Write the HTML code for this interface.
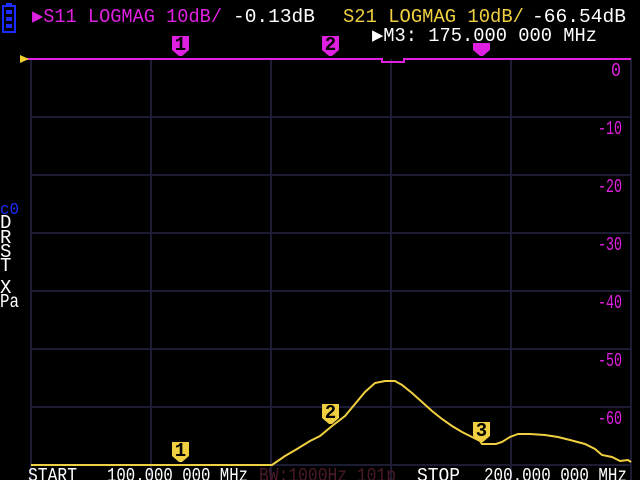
<!DOCTYPE html>
<html><head><meta charset="utf-8"><style>
html,body{margin:0;padding:0;background:#000;width:640px;height:480px;overflow:hidden}
svg{display:block}
text{font-family:"Liberation Mono",monospace;font-size:19px}
</style></head><body>
<svg width="640" height="480" viewBox="0 0 640 480" xmlns="http://www.w3.org/2000/svg">
<rect width="640" height="480" fill="#000"/>
<g stroke="#1c1c34" stroke-width="2" fill="none">
<path d="M31 59V480M151 59V480M271 59V480M391 59V480M511 59V480M631 59V480"/>
<path d="M31 117H631M31 175H631M31 233H631M31 291H631M31 349H631M31 407H631M31 465H631"/>
</g>
<rect x="3" y="6" width="12" height="26" fill="none" stroke="#1a2cff" stroke-width="2"/>
<rect x="6" y="3" width="6" height="3" fill="#1a2cff"/>
<rect x="6" y="10" width="6" height="4" fill="#1a2cff"/>
<rect x="6" y="17" width="6" height="4" fill="#1a2cff"/>
<rect x="6" y="24" width="6" height="4" fill="#1a2cff"/>
<path d="M22 59H382V62H404V59H631" stroke="#e020e0" stroke-width="2" fill="none"/>
<path d="M20 55L29 59L20 63Z" fill="#f0d030"/>
<path d="M31 465H272L285 456L297 449L310 441L320 436L332 426L345 416L355 404L365 392L375 383L385 381L395 381L402 385L412 393L422 402L432 411L442 419L452 426L462 432L472 437L480 441L482 444L496 444L502 442L510 437L518 434L530 434L545 435L558 437L570 440L585 444L595 449L602 455L612 457L620 461L628 460L631 462" stroke="#f0d040" stroke-width="2" fill="none"/>
<g fill="#e020e0">
<path d="M172 36H189V50L182 56H179L172 50Z"/>
<path d="M322 36H339V50L332 56H329L322 50Z"/>
<path d="M473 43H490V50L483 56H480L473 50Z"/>
</g>
<g fill="#f0d040">
<path d="M172 442H189V456L182 462H179L172 456Z"/>
<path d="M322 404H339V418L332 424H329L322 418Z"/>
<path d="M473 422H490V436L483 442H480L473 436Z"/>
</g>
<g font-weight="bold" text-anchor="middle" style="font-size:14px" fill="#000">
<text x="180.5" y="50">1</text>
<text x="330.5" y="50">2</text>
<text x="180.5" y="456">1</text>
<text x="330.5" y="418">2</text>
<text x="481.5" y="436">3</text>
</g>
<g lengthAdjust="spacingAndGlyphs">
<text x="32" y="22" fill="#e020e0" textLength="190" lengthAdjust="spacingAndGlyphs">▶S11 LOGMAG 10dB/</text>
<text x="233" y="22" fill="#fff" textLength="82" lengthAdjust="spacingAndGlyphs">-0.13dB</text>
<text x="343" y="22" fill="#f0d040" textLength="181" lengthAdjust="spacingAndGlyphs">S21 LOGMAG 10dB/</text>
<text x="532" y="22" fill="#fff" textLength="94" lengthAdjust="spacingAndGlyphs">-66.54dB</text>
<text x="372" y="41" fill="#fff" textLength="225" lengthAdjust="spacingAndGlyphs">▶M3: 175.000 000 MHz</text>
</g>
<g fill="#e020e0">
<text x="611" y="76" textLength="10" lengthAdjust="spacingAndGlyphs">0</text>
<text x="598" y="134" textLength="24" lengthAdjust="spacingAndGlyphs">-10</text>
<text x="598" y="192" textLength="24" lengthAdjust="spacingAndGlyphs">-20</text>
<text x="598" y="250" textLength="24" lengthAdjust="spacingAndGlyphs">-30</text>
<text x="598" y="308" textLength="24" lengthAdjust="spacingAndGlyphs">-40</text>
<text x="598" y="366" textLength="24" lengthAdjust="spacingAndGlyphs">-50</text>
<text x="598" y="424" textLength="24" lengthAdjust="spacingAndGlyphs">-60</text>
</g>
<text x="0" y="214" fill="#1a2cff" style="font-size:17px" textLength="19" lengthAdjust="spacingAndGlyphs">c0</text>
<g fill="#fff" style="font-size:15px">
<text x="0" y="228">D</text>
<text x="0" y="243">R</text>
<text x="0" y="257">S</text>
<text x="0" y="271">T</text>
<text x="0" y="293">X</text>
<text x="0" y="307" textLength="19" lengthAdjust="spacingAndGlyphs">Pa</text>
</g>
<text x="28" y="481" fill="#fff" textLength="49" lengthAdjust="spacingAndGlyphs">START</text>
<text x="107" y="481" fill="#fff" textLength="141" lengthAdjust="spacingAndGlyphs">100.000 000 MHz</text>
<text x="259" y="481" fill="#4a1a2a" textLength="137" lengthAdjust="spacingAndGlyphs">BW:1000Hz 101p</text>
<text x="417" y="481" fill="#fff" textLength="43" lengthAdjust="spacingAndGlyphs">STOP</text>
<text x="484" y="481" fill="#fff" textLength="143" lengthAdjust="spacingAndGlyphs">200.000 000 MHz</text>
</svg>
</body></html>
